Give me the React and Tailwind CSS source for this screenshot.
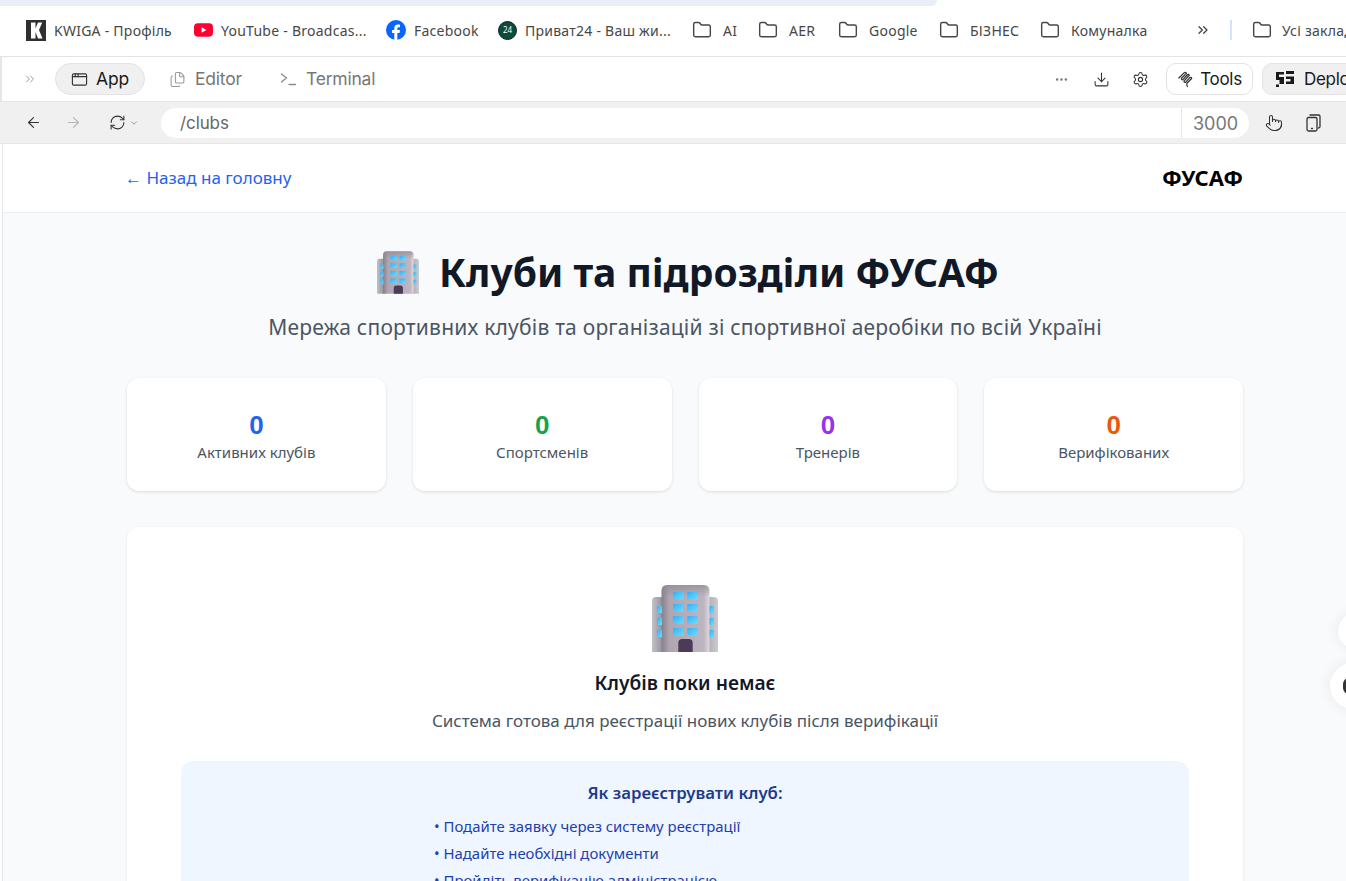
import { ArrowLeft, ArrowRight, ChevronDown, ChevronsRight, Download, Ellipsis, Files, Folder, Pointer, RefreshCw, Settings, AppWindow } from 'lucide-react';

const bookmarks = [
  { label: 'AI', width: 'w-[66px]' },
  { label: 'AER', width: 'w-[80px]' },
  { label: 'Google', width: 'w-[101px]' },
  { label: 'БІЗНЕС', width: 'w-[101px]' },
  { label: 'Комуналка', width: 'w-[155px]' },
];

const stats = [
  { value: '0', label: 'Активних клубів', color: 'text-[#2563eb]' },
  { value: '0', label: 'Спортсменів', color: 'text-[#16a34a]' },
  { value: '0', label: 'Тренерів', color: 'text-[#9333ea]' },
  { value: '0', label: 'Верифікованих', color: 'text-[#ea580c]' },
];

const steps = [
  'Подайте заявку через систему реєстрації',
  'Надайте необхідні документи',
  'Пройдіть верифікацію адміністрацією',
];

function BuildingEmoji({ id, className }) {
  return (
    <svg viewBox="0 0 66 67" className={className}>
      <defs>
        <linearGradient id={`${id}-body`} x1="0" x2="1" y1="0" y2="0">
          <stop offset="0" stopColor="#85808b" />
          <stop offset="0.16" stopColor="#ada5b0" />
          <stop offset="0.88" stopColor="#bdb5bf" />
          <stop offset="1" stopColor="#dedade" />
        </linearGradient>
        <linearGradient id={`${id}-top`} x1="0" x2="0" y1="0" y2="1">
          <stop offset="0" stopColor="#8f8a94" stopOpacity="0.7" />
          <stop offset="1" stopColor="#8f8a94" stopOpacity="0" />
        </linearGradient>
        <linearGradient id={`${id}-left`} x1="0" x2="1" y1="0" y2="0">
          <stop offset="0" stopColor="#c4c0c8" />
          <stop offset="1" stopColor="#8f8b94" />
        </linearGradient>
        <linearGradient id={`${id}-right`} x1="0" x2="1" y1="0" y2="0">
          <stop offset="0" stopColor="#aaa5ae" />
          <stop offset="1" stopColor="#cfcbd2" />
        </linearGradient>
        <linearGradient id={`${id}-glass`} x1="0" x2="1" y1="0" y2="1">
          <stop offset="0" stopColor="#35aef8" />
          <stop offset="1" stopColor="#6fdcff" />
        </linearGradient>
      </defs>
      <path d="M0 67V16q0-4 4-4h8v55Z" fill={`url(#${id}-left)`} />
      <path d="M66 67V16q0-4-4-4h-8v55Z" fill={`url(#${id}-right)`} />
      <path d="M9.500 67V6q0-6 6-6h36q6 0 6 6v61Z" fill={`url(#${id}-body)`} />
      <path d="M9.500 12V6q0-6 6-6h36q6 0 6 6v6Z" fill={`url(#${id}-top)`} />
      {[21, 33, 45].map((y) => (
        <g key={y} fill={`url(#${id}-glass)`}>
          <rect x="5" y={y} width="5" height="7" />
          <rect x="57.500" y={y} width="4.500" height="7" />
        </g>
      ))}
      {[7, 19, 31, 43].map((y) => (
        <g key={y} fill={`url(#${id}-glass)`}>
          <rect x="21" y={y} width="10.500" height="7.500" />
          <rect x="35.300" y={y} width="10.500" height="7.500" />
        </g>
      ))}
      <path d="M26.300 67V58q0-4 4-4h6.400q4 0 4 4v9Z" fill="#4b3a58" />
    </svg>
  );
}

function KwigaLogo() {
  return (
    <svg viewBox="0 0 20 21" className="w-[20px] h-[21px] shrink-0">
      <rect width="20" height="21" fill="#2f2f2f" />
      <path d="M5 2.500h4.500v6L12 2.500h4.200l-3.200 7.500 3.500 8.500h-4.500l-2.500-6.500v6.500H5Z" fill="#fff" />
    </svg>
  );
}

function DeployIcon() {
  return (
    <svg viewBox="0 0 18 16" className="w-[18px] h-[16px] shrink-0" fill="#1a1a1a">
      <path d="M0 1h8v2.500H3V6h5v7H3.500V9H0ZM0 13.500h3V16H0Z" />
      <path d="M10 0h8v3h-8ZM10 5.500h8V13h-8v-2.500h4.500V8H10Z" />
    </svg>
  );
}

function ToolsIcon() {
  return (
    <svg viewBox="0 0 18 19" className="w-[17px] h-[18px] shrink-0" fill="none" stroke="#333" strokeWidth="1.300" strokeLinecap="round" strokeLinejoin="round">
      <path d="M2 8.500L7.500 3Q9 2 10 3.500L5 8.500Q4 10 6 10.500L11 5Q12.500 4 13 5.500L7.500 11.500Q7 13 9 13L13.500 8Q15.500 7 15.500 9L10.500 14Q10 15.500 11 17.500" />
    </svg>
  );
}

function TerminalIcon() {
  return (
    <svg viewBox="0 0 17 14" className="w-[17px] h-[14px] shrink-0" fill="none" stroke="#8a8a8a" strokeWidth="1.300" strokeLinecap="round" strokeLinejoin="round">
      <path d="M1.500 2l5 4-5 4M9 12.500h6.500" />
    </svg>
  );
}

function DeviceIcon() {
  return (
    <svg viewBox="0 0 17 18" className="w-[17px] h-[18px]" fill="none" stroke="#333" strokeWidth="1.300" strokeLinecap="round">
      <rect x="2" y="3.500" width="10" height="13.500" rx="1.500" />
      <path d="M5 1h8.500a1.500 1.500 0 0 1 1.500 1.500v10q0 1.500-1.500 1.500M6.500 14.500h1" />
    </svg>
  );
}

function Bookmark({ icon, label, className }) {
  return (
    <div className={`flex items-center shrink-0 ${className}`}>
      {icon}
      <span className="text-[14px] text-[#474747] whitespace-nowrap">{label}</span>
    </div>
  );
}

export default function App() {
  return (
    <div className="relative h-[881px] w-[1346px] overflow-hidden bg-white font-['Noto_Sans',sans-serif]">
      {/* Browser tab strip remnant */}
      <div className="h-[6px] w-[937px] bg-[#e9eef8] rounded-br-[10px]" />

      {/* Bookmarks bar */}
      <div className="h-[51px] flex items-center pl-[26px] pb-[2px] border-b border-[#e3e3e3] tracking-[0.25px]">
        <Bookmark className="w-[168px] gap-[8px]" label="KWIGA - Профіль" icon={<KwigaLogo />} />
        <Bookmark
          className="w-[192px] gap-[8px]"
          label="YouTube - Broadcas..."
          icon={
            <svg viewBox="0 0 20 14" className="w-[19px] h-[14px]">
              <rect width="20" height="14" rx="4" fill="#ff0033" />
              <path d="M8 4l5 3-5 3Z" fill="#fff" />
            </svg>
          }
        />
        <Bookmark
          className="w-[112px] gap-[8px]"
          label="Facebook"
          icon={
            <svg viewBox="0 0 20 20" className="w-[20px] h-[20px]">
              <circle cx="10" cy="10" r="10" fill="#0866ff" />
              <path d="M8.300 20v-7H6v-3h2.300V8.300C8.300 5.700 9.700 4.500 12 4.500c.9 0 1.700.1 2 .2v2.600h-1.200c-1.200 0-1.500.6-1.500 1.500V10H14l-.5 3h-2.200v7Z" fill="#fff" />
            </svg>
          }
        />
        <Bookmark
          className="w-[194px] gap-[8px]"
          label="Приват24 - Ваш жи..."
          icon={
            <div className="w-[19px] h-[19px] rounded-full bg-[#0c4a3a] border border-[#123] flex items-center justify-center text-white text-[8px] tracking-normal">24</div>
          }
        />
        {bookmarks.map((b) => (
          <Bookmark key={b.label} className={`${b.width} gap-[11px]`} label={b.label} icon={<Folder className="w-[20px] h-[20px] text-[#474747]" strokeWidth={1.700} />} />
        ))}
        <ChevronsRight className="w-[16px] h-[16px] text-[#474747] shrink-0" />
        <div className="w-[2px] h-[20px] bg-[#d3e3fd] ml-[19px] mr-[20px] shrink-0" />
        <Bookmark className="gap-[10px]" label="Усі закладки" icon={<Folder className="w-[20px] h-[20px] text-[#474747]" strokeWidth={1.700} />} />
      </div>

      {/* Replit toolbar */}
      <div className="h-[45px] flex items-center border-l-2 border-b border-[#e6e6e6] pl-[21px] font-['Inter',sans-serif]">
        <ChevronsRight className="w-[14px] h-[14px] text-[#8a8a8a]" strokeWidth={1.500} />
        <div className="ml-[18px] h-[32px] w-[90px] flex items-center justify-center gap-[8px] rounded-full bg-[#f0f0f0] border border-[#e3e3e3]">
          <AppWindow className="w-[17px] h-[17px] text-[#333]" strokeWidth={1.600} />
          <span className="text-[17.500px] text-[#1a1a1a] tracking-[-0.2px]">App</span>
        </div>
        <div className="ml-[24px] flex items-center gap-[9px] text-[#777]">
          <Files className="w-[17px] h-[17px] text-[#999]" strokeWidth={1.500} />
          <span className="text-[17.500px] tracking-[-0.2px]">Editor</span>
        </div>
        <div className="ml-[38px] flex items-center gap-[9px] text-[#777]">
          <TerminalIcon />
          <span className="text-[17.500px] tracking-[-0.2px]">Terminal</span>
        </div>
        <div className="ml-auto flex items-center">
          <Ellipsis className="w-[15px] h-[15px] text-[#777]" />
          <Download className="w-[17px] h-[17px] text-[#333] ml-[24px]" strokeWidth={1.500} />
          <Settings className="w-[17px] h-[17px] text-[#333] ml-[22px]" strokeWidth={1.500} />
          <div className="ml-[17px] h-[32px] w-[87px] flex items-center justify-center gap-[6px] rounded-[10px] border border-[#e3e3e3]">
            <ToolsIcon />
            <span className="pt-[2px] text-[17px] text-[#1a1a1a] tracking-[-0.3px]">Tools</span>
          </div>
          <div className="ml-[9px] mr-[-42px] h-[32px] w-[126px] flex items-center pl-[13px] gap-[10px] rounded-[10px] bg-[#f0f0f0] border border-[#e3e3e3]">
            <DeployIcon />
            <span className="pt-[2px] text-[17px] text-[#1a1a1a] tracking-[-0.3px]">Deploy</span>
          </div>
        </div>
      </div>

      {/* Preview address bar */}
      <div className="h-[42px] flex items-center bg-[#f0f0f0] border-b border-[#e6e6e6] pl-[25px] font-['Inter',sans-serif]">
        <ArrowLeft className="w-[17px] h-[17px] text-[#333]" strokeWidth={1.600} />
        <ArrowRight className="w-[17px] h-[17px] text-[#b5b5b5] ml-[23px]" strokeWidth={1.600} />
        <RefreshCw className="w-[17px] h-[17px] text-[#333] ml-[27px]" strokeWidth={1.500} />
        <ChevronDown className="w-[10px] h-[10px] text-[#888] ml-[3px]" />
        <div className="ml-[22px] w-[1088px] h-[30px] flex items-center bg-white rounded-full pl-[19px]">
          <span className="pt-[2px] text-[17px] text-[#666] tracking-[-0.1px]">/clubs</span>
          <div className="ml-auto h-full w-[68px] pt-[1px] flex items-center justify-center border-l border-[#e6e6e6] text-[18px] text-[#777]">3000</div>
        </div>
        <Pointer className="w-[18px] h-[18px] text-[#333] ml-[16px]" strokeWidth={1.400} />
        <div className="ml-[22px]">
          <DeviceIcon />
        </div>
      </div>

      {/* Preview page */}
      <div className="h-[737px] ml-[2px] border-l border-[#e6e6e6] bg-[#f9fafb] overflow-hidden">
        <header className="h-[69px] bg-white border-b border-[#eceef1] pl-[122px]">
          <div className="w-[1118px] h-full flex items-center justify-between">
            <a className="text-[17px] text-[#2563eb]">← Назад на головну</a>
            <span className="pb-[2px] text-[22px] font-bold text-black">ФУСАФ</span>
          </div>
        </header>

        <main className="w-[1116px] ml-[124px]">
          <div className="h-[165px] pt-[31px] flex flex-col items-center">
            <h1 className="ml-[6px] flex items-center gap-[20px] text-[39px] leading-[56px] font-bold text-[#111827]">
              <BuildingEmoji id="title" className="w-[42px] h-[43px]" />
              Клуби та підрозділи ФУСАФ
            </h1>
            <p className="mt-[13px] text-[21px] leading-[28px] text-[#4b5563] tracking-[0.22px] whitespace-nowrap">
              Мережа спортивних клубів та організацій зі спортивної аеробіки по всій Україні
            </p>
          </div>

          <div className="grid grid-cols-4 gap-[27px]">
            {stats.map((s) => (
              <div key={s.label} className="h-[113px] bg-white rounded-[12px] shadow-[0_1px_3px_rgba(0,0,0,0.12)] flex flex-col items-center pt-[30px]">
                <div className={`text-[26px] leading-[34px] font-bold font-['Liberation_Sans',sans-serif] ${s.color}`}>{s.value}</div>
                <div className="text-[15px] leading-[20px] text-[#4b5563]">{s.label}</div>
              </div>
            ))}
          </div>

          <section className="mt-[36px] bg-white rounded-[12px] shadow-[0_1px_3px_rgba(0,0,0,0.1)] pt-[58px] px-[54px] h-[500px] flex flex-col items-center">
            <BuildingEmoji id="empty" className="w-[66px] h-[67px]" />
            <h3 className="mt-[17px] text-[19.200px] leading-[28px] font-semibold text-[#111827]">Клубів поки немає</h3>
            <p className="mt-[10px] text-[17px] leading-[28px] text-[#4b5563]">
              Система готова для реєстрації нових клубів після верифікації
            </p>
            <div className="mt-[26px] w-full bg-[#eff6ff] rounded-[12px] pt-[18px] flex flex-col items-center">
              <h4 className="text-[16.800px] leading-[28px] font-semibold text-[#1e3a8a]">Як зареєструвати клуб:</h4>
              <ul className="mt-[6px] self-start ml-[253px] text-[14.900px] leading-[27px] text-[#1e40af] whitespace-nowrap">
                {steps.map((step) => (
                  <li key={step}>• {step}</li>
                ))}
              </ul>
            </div>
          </section>
        </main>
      </div>

      {/* Floating widgets at the edge */}
      <div className="absolute left-[1338px] top-[613px] w-[36px] h-[36px] rounded-full bg-white shadow-[0_0_14px_rgba(0,0,0,0.08)]" />
      <div className="absolute left-[1330px] top-[663px] w-[46px] h-[46px] rounded-full bg-white shadow-[0_0_14px_rgba(0,0,0,0.08)] flex items-center pl-[13px]">
        <div className="w-[12px] h-[16px] rounded-full border-[3px] border-[#333]" />
      </div>
    </div>
  );
}
